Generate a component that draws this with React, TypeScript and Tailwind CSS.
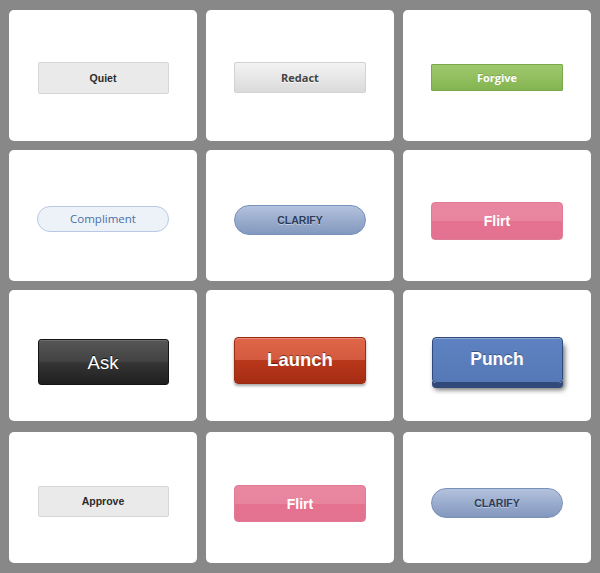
import type { ReactNode } from 'react'

type Cell = {
  label: string
  className: string
  offset: string
  inner?: ReactNode
}

const helv = "font-['Liberation_Sans',Arial,sans-serif]"
const lucida = "font-['Open_Sans','DejaVu_Sans',sans-serif]"

const cells: Cell[] = [
  {
    label: 'Quiet',
    offset: 'mt-[5px]',
    className: `${helv} w-[131px] h-[32px] bg-[#eaeaea] border border-[#d6d6d6] rounded-[2px] text-[10.5px] font-bold text-[#2b2b2b]`,
  },
  {
    label: 'Redact',
    offset: 'mt-[4px]',
    className: `${lucida} w-[132px] h-[31px] bg-gradient-to-b from-[#f3f3f3] to-[#dadada] border border-[#d2d2d2] rounded-[2px] text-[11px] font-bold text-[#444] [text-shadow:0_1px_0_rgba(255,255,255,0.8)]`,
  },
  {
    label: 'Forgive',
    offset: 'mt-[4px]',
    className: `${lucida} w-[132px] h-[27px] bg-gradient-to-b from-[#a0c96e] to-[#84b451] border border-[#7aa84a] rounded-[1px] text-[11px] font-bold text-white [text-shadow:0_-1px_0_rgba(0,0,0,0.15)]`,
  },
  {
    label: 'Compliment',
    offset: 'mt-[7px]',
    className: `${lucida} w-[132px] h-[26px] bg-[#edf2f9] border border-[#b7c9e4] rounded-full text-[11.5px] text-[#4a6fa6]`,
  },
  {
    label: 'CLARIFY',
    offset: 'mt-[9px]',
    className: `${helv} w-[132px] h-[30px] bg-gradient-to-b from-[#b3c2dd] to-[#8398be] border border-[#7a90ba] rounded-full text-[10.5px] font-bold text-[#2c3c5a] [text-shadow:0_1px_0_rgba(255,255,255,0.45)]`,
  },
  {
    label: 'Flirt',
    offset: 'mt-[11px]',
    className: `${helv} w-[132px] h-[38px] bg-[linear-gradient(to_bottom,#e987a1_0%,#e8849e_50%,#e4728f_50%,#e37190_100%)] border border-[#e07a95] rounded-[4px] text-[14px] font-bold text-white`,
  },
  {
    label: 'Ask',
    offset: 'mt-[13px]',
    className: `${helv} w-[131px] h-[46px] bg-[linear-gradient(to_bottom,#565656_0%,#434343_48%,#353535_52%,#1f1f1f_100%)] border border-[#141414] rounded-[3px] text-[18.5px] text-white pt-[3px] [text-shadow:0_-1px_0_rgba(0,0,0,0.8)] shadow-[inset_0_1px_0_rgba(255,255,255,0.15)]`,
  },
  {
    label: 'Launch',
    offset: 'mt-[10px]',
    className: `${helv} w-[132px] h-[47px] bg-[linear-gradient(to_bottom,#e0664a_0%,#d35a3e_50%,#b9381b_50%,#a42c13_100%)] border border-[#9b2a12] rounded-[4px] text-[18.5px] font-bold text-white [text-shadow:0_-1px_0_rgba(0,0,0,0.45)] shadow-[inset_0_1px_0_rgba(255,255,255,0.25),0_2px_3px_rgba(0,0,0,0.35)]`,
  },
  {
    label: 'Punch',
    offset: 'mt-[9px]',
    className: `${helv} w-[131px] h-[46px] bg-gradient-to-b from-[#5e82c1] to-[#5678b6] border border-[#2f4a7c] rounded-[4px] text-[17.5px] font-bold text-white [text-shadow:0_-1px_0_rgba(0,0,0,0.35)] shadow-[inset_0_1px_0_rgba(255,255,255,0.3),0_5px_0_#32497a,2px_7px_5px_rgba(0,0,0,0.55)]`,
  },
  {
    label: 'Approve',
    offset: 'mt-[8px]',
    className: `${helv} w-[131px] h-[31px] bg-[#eaeaea] border border-[#d6d6d6] rounded-[2px] text-[10.5px] font-bold text-[#2b2b2b]`,
  },
  {
    label: 'Flirt',
    offset: 'mt-[12px]',
    className: `${helv} w-[132px] h-[37px] bg-[linear-gradient(to_bottom,#e987a1_0%,#e8849e_50%,#e4728f_50%,#e37190_100%)] border border-[#e07a95] rounded-[4px] text-[14px] font-bold text-white`,
  },
  {
    label: 'CLARIFY',
    offset: 'mt-[11px]',
    className: `${helv} w-[132px] h-[30px] bg-gradient-to-b from-[#b3c2dd] to-[#8398be] border border-[#7a90ba] rounded-full text-[10.5px] font-bold text-[#2c3c5a] [text-shadow:0_1px_0_rgba(255,255,255,0.45)]`,
  },
]

function Card({ cell, last }: { cell: Cell; last: boolean }) {
  return (
    <div
      className={`h-[131px] bg-white rounded-[5px] flex items-center justify-center ${last ? 'mt-[2px]' : ''}`}
    >
      <button
        className={`${cell.className} ${cell.offset} flex items-center justify-center leading-none`}
      >
        {cell.label}
      </button>
    </div>
  )
}

export default function App() {
  return (
    <div className="w-[600px] h-[573px] bg-[#888888] px-[9px] pt-[10px] overflow-hidden">
      <div className="grid grid-cols-3 gap-[9px]">
        {cells.map((cell, i) => (
          <Card key={i} cell={cell} last={i >= 9} />
        ))}
      </div>
    </div>
  )
}
